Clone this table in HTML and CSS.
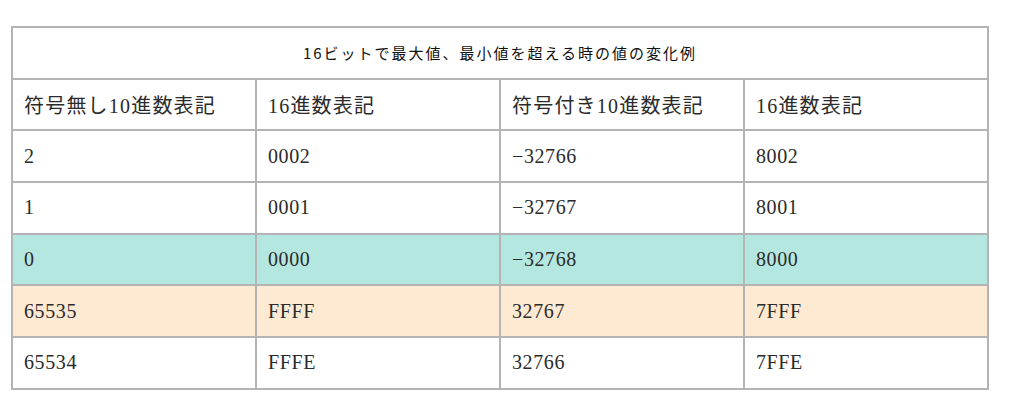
FILE: index.html
```html
<!DOCTYPE html>
<html lang="ja">
<head>
<meta charset="utf-8">
<title>16ビットで最大値、最小値を超える時の値の変化例</title>
<link rel="stylesheet" href="styles.css">
</head>
<body>
<main class="page">
<table class="value-table">
  <thead>
    <tr><th class="title" colspan="4">16ビットで最大値、最小値を超える時の値の変化例</th></tr>
    <tr class="head-row">
      <td>符号無し10進数表記</td>
      <td>16進数表記</td>
      <td>符号付き10進数表記</td>
      <td>16進数表記</td>
    </tr>
  </thead>
  <tbody>
    <tr><td>2</td><td>0002</td><td>−32766</td><td>8002</td></tr>
    <tr><td>1</td><td>0001</td><td>−32767</td><td>8001</td></tr>
    <tr class="row-min"><td>0</td><td>0000</td><td>−32768</td><td>8000</td></tr>
    <tr class="row-max"><td>65535</td><td>FFFF</td><td>32767</td><td>7FFF</td></tr>
    <tr><td>65534</td><td>FFFE</td><td>32766</td><td>7FFE</td></tr>
  </tbody>
</table>
</main>
</body>
</html>
```

FILE: styles.css
```css
html, body {
  margin: 0;
  padding: 0;
  background: #ffffff;
}

.page {
  padding: 26px 0 0 11px;
}

.value-table {
  width: 978px;
  border-collapse: collapse;
  table-layout: fixed;
  color: #2b2b2b;
  font-family: "Liberation Serif", "Noto Sans CJK JP", serif;
  font-size: 20px;
}

.value-table th,
.value-table td {
  border: 2px solid #b4b4b4;
  height: 49.7px;
  padding: 0 0 0 11px;
  text-align: left;
  vertical-align: middle;
  letter-spacing: 0.6px;
  font-weight: normal;
}

.value-table th.title {
  text-align: center;
  padding: 0;
  font-family: "Noto Sans CJK JP", "Noto Sans", sans-serif;
  font-size: 15px;
  font-weight: 400;
  letter-spacing: 2px;
  color: #111111;
}

.head-row td {
  letter-spacing: 1.2px;
}

.row-min td {
  background: #b3e7e0;
}

.row-max td {
  background: #feead2;
}
```
